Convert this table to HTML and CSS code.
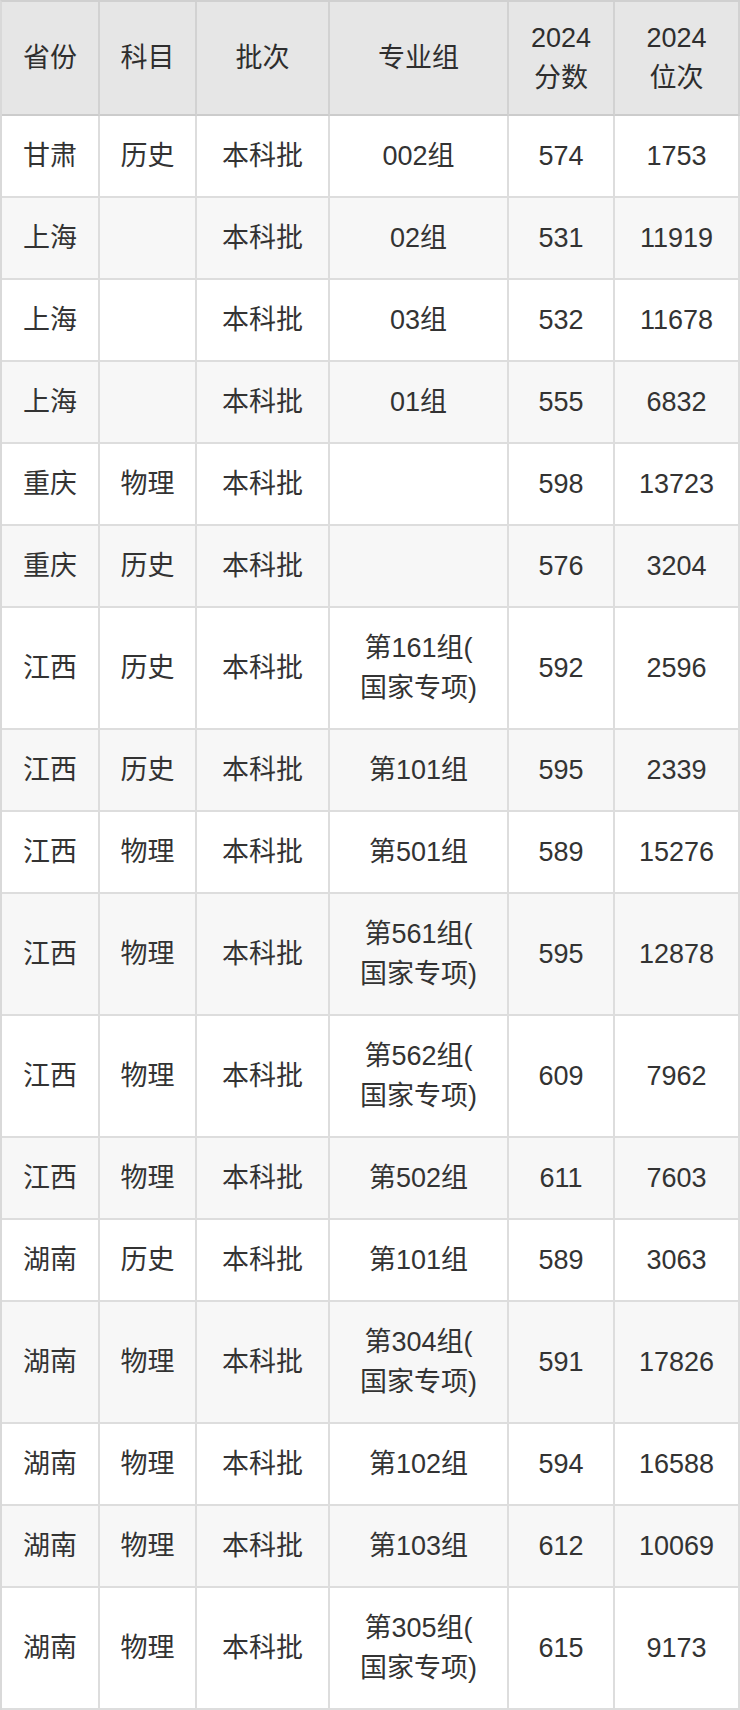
FILE: index.html
```html
<!DOCTYPE html>
<html lang="zh-CN">
<head>
<meta charset="utf-8">
<title>分数位次</title>
<link rel="stylesheet" href="styles.css">
</head>
<body>
<table class="score-table">
  <thead>
    <tr>
      <th class="c1">省份</th>
      <th class="c2">科目</th>
      <th class="c3">批次</th>
      <th class="c4">专业组</th>
      <th class="c5">2024<br>分数</th>
      <th class="c6">2024<br>位次</th>
    </tr>
  </thead>
  <tbody>
    <tr><td>甘肃</td><td>历史</td><td>本科批</td><td>002组</td><td>574</td><td>1753</td></tr>
    <tr><td>上海</td><td></td><td>本科批</td><td>02组</td><td>531</td><td>11919</td></tr>
    <tr><td>上海</td><td></td><td>本科批</td><td>03组</td><td>532</td><td>11678</td></tr>
    <tr><td>上海</td><td></td><td>本科批</td><td>01组</td><td>555</td><td>6832</td></tr>
    <tr><td>重庆</td><td>物理</td><td>本科批</td><td></td><td>598</td><td>13723</td></tr>
    <tr><td>重庆</td><td>历史</td><td>本科批</td><td></td><td>576</td><td>3204</td></tr>
    <tr><td>江西</td><td>历史</td><td>本科批</td><td>第161组(<br>国家专项)</td><td>592</td><td>2596</td></tr>
    <tr><td>江西</td><td>历史</td><td>本科批</td><td>第101组</td><td>595</td><td>2339</td></tr>
    <tr><td>江西</td><td>物理</td><td>本科批</td><td>第501组</td><td>589</td><td>15276</td></tr>
    <tr><td>江西</td><td>物理</td><td>本科批</td><td>第561组(<br>国家专项)</td><td>595</td><td>12878</td></tr>
    <tr><td>江西</td><td>物理</td><td>本科批</td><td>第562组(<br>国家专项)</td><td>609</td><td>7962</td></tr>
    <tr><td>江西</td><td>物理</td><td>本科批</td><td>第502组</td><td>611</td><td>7603</td></tr>
    <tr><td>湖南</td><td>历史</td><td>本科批</td><td>第101组</td><td>589</td><td>3063</td></tr>
    <tr><td>湖南</td><td>物理</td><td>本科批</td><td>第304组(<br>国家专项)</td><td>591</td><td>17826</td></tr>
    <tr><td>湖南</td><td>物理</td><td>本科批</td><td>第102组</td><td>594</td><td>16588</td></tr>
    <tr><td>湖南</td><td>物理</td><td>本科批</td><td>第103组</td><td>612</td><td>10069</td></tr>
    <tr><td>湖南</td><td>物理</td><td>本科批</td><td>第305组(<br>国家专项)</td><td>615</td><td>9173</td></tr>
  </tbody>
</table>
</body>
</html>
```

FILE: styles.css
```css
html, body {
  margin: 0;
  padding: 0;
  background: #ffffff;
}

.score-table {
  width: 740px;
  table-layout: fixed;
  border-collapse: separate;
  border-spacing: 0;
  border-left: 2px solid #d9d9d9;
  border-top: 2px solid #d0d0d0;
  font-family: "Liberation Sans", "Noto Sans CJK SC", sans-serif;
  font-size: 27px;
  color: #333333;
}

.score-table th,
.score-table td {
  box-sizing: border-box;
  text-align: center;
  vertical-align: middle;
  line-height: 40px;
  padding: 20px 4px;
  border-right: 2px solid #dddddd;
  border-bottom: 2px solid #dddddd;
  font-weight: normal;
}

.score-table th {
  background: #e6e6e6;
  padding: 16px 4px;
  border-right-color: #d2d2d2;
  border-bottom-color: #cccccc;
  color: #2e2e2e;
}

.score-table .c1 { width: 98px; }
.score-table .c2 { width: 97px; }
.score-table .c3 { width: 133px; }
.score-table .c4 { width: 179px; }
.score-table .c5 { width: 106px; }
.score-table .c6 { width: 125px; }

.score-table tbody tr:nth-child(even) td {
  background: #f7f7f7;
}
```
